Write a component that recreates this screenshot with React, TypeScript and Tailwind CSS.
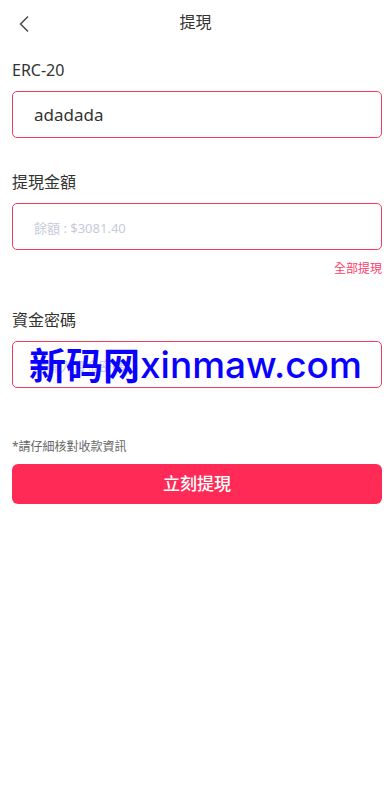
import { useState } from "react";

const font = { fontFamily: '"Noto Sans", "Noto Sans CJK TC", sans-serif' };

function Field({
    label,
    value,
    placeholder,
    onChange,
    children,
}: {
    label: string;
    value: string;
    placeholder?: string;
    onChange: (v: string) => void;
    children?: React.ReactNode;
}) {
    return (
        <div className="flex flex-col">
            <span className="text-[16px] leading-[24px] text-[#333333]">{label}</span>
            <div className="relative mt-[9px]">
                <input
                    value={value}
                    placeholder={placeholder}
                    onChange={(e) => onChange(e.target.value)}
                    className="w-full h-[47px] px-[21px] rounded-[5px] border border-[#f23a60] text-[17px] text-[#333333] outline-none placeholder:text-[#c6cbdc] placeholder:text-[13px]"
                />
                {children}
            </div>
        </div>
    );
}

export default function App() {
    const [address, setAddress] = useState("adadada");
    const [amount, setAmount] = useState("");
    const [password, setPassword] = useState("");

    return (
        <div className="w-full min-h-screen bg-white" style={font}>
            <div className="relative flex items-center justify-center h-[44px]">
                <button className="absolute left-[14px] top-[11px] p-1">
                    <svg width="12" height="18" viewBox="0 0 12 18" fill="none">
                        <path d="M10 1.5L2.5 9L10 16.5" stroke="#444" strokeWidth="1.4" />
                    </svg>
                </button>
                <span className="text-[16px] text-[#333333]">提現</span>
            </div>

            <div className="flex flex-col pl-[12px] pr-[9px] pt-[14px]">
                <Field label="ERC-20" value={address} onChange={setAddress} />

                <div className="mt-[32px]">
                    <Field label="提現金額" value={amount} placeholder="餘額 : $3081.40" onChange={setAmount} />
                </div>
                <div className="flex justify-end mt-[10px]">
                    <span className="text-[12px] text-[#ff3a6a]">全部提現</span>
                </div>

                <div className="mt-[30px]">
                    <Field label="資金密碼" value={password} placeholder="請輸入資金密碼" onChange={setPassword}>
                        <div className="absolute inset-0 flex items-center pl-[17px] pointer-events-none text-[#0a00ff] text-[37px] leading-none whitespace-nowrap">
                            <span
                                className="font-bold"
                                style={{ fontFamily: '"Noto Sans CJK SC", sans-serif', fontStyle: "oblique 8deg" }}
                            >
                                新码网
                            </span>
                            <span className="font-medium" style={{ fontFamily: "Inter, sans-serif" }}>
                                xinmaw.com
                            </span>
                        </div>
                    </Field>
                </div>

                <span className="mt-[50px] text-[12px] text-[#666666]">*請仔細核對收款資訊</span>
                <button className="mt-[8px] h-[40px] rounded-[6px] bg-[#ff2a55] text-white text-[17px] font-medium">
                    立刻提現
                </button>
            </div>
        </div>
    );
}
